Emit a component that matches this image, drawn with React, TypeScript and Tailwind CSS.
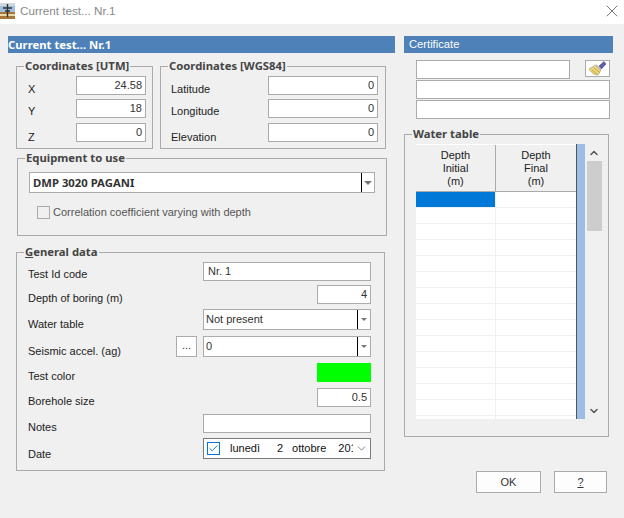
import { ReactNode } from 'react';
import { X, ChevronUp, ChevronDown, Check } from 'lucide-react';

const BOLD = "font-['Noto_Sans',sans-serif] font-bold text-[11.3px]";

function Field({ value, className, right }: { value?: string; className: string; right?: boolean }) {
  return (
    <div className={`border border-[#ababab] bg-white flex items-center px-[3px] text-[#333] ${right ? 'justify-end' : ''} ${className}`}>
      {value}
    </div>
  );
}

function Combo({ value, className, bold, arrow }: { value: string; className: string; bold?: boolean; arrow: string }) {
  return (
    <div className={`border border-[#ababab] bg-white flex items-center text-[#333] ${className}`}>
      <span className={`flex-1 ${bold ? `${BOLD} pl-[3px]` : 'pl-[2px]'}`}>{value}</span>
      <div className="w-[13px] self-stretch border-l border-black flex items-center justify-center">
        <div className={`w-0 h-0 border-x-transparent border-t-[#777] ${arrow}`} />
      </div>
    </div>
  );
}

function Group({ title, className, children }: { title: ReactNode; className: string; children: ReactNode }) {
  return (
    <div className={`relative border border-[#ababab] ${className}`}>
      <span className={`absolute left-[7px] -top-[9px] bg-[#f0f0f0] px-[1px] text-[#444] leading-[16px] ${BOLD}`}>{title}</span>
      {children}
    </div>
  );
}

function CoordRow({ label, value, labelW, fieldW, labelPad }: { label: string; value: string; labelW: string; fieldW: string; labelPad: string }) {
  return (
    <div className="flex h-[19px] text-[#222]">
      <span className={`leading-[18px] ${labelPad} ${labelW}`}>{label}</span>
      <Field value={value} right className={`h-[19px] ${fieldW}`} />
    </div>
  );
}

function DataRow({ label, className, labelPad, children }: { label: string; className: string; labelPad: string; children: ReactNode }) {
  return (
    <div className={`flex justify-between ${className}`}>
      <span className={`leading-[18px] text-[#222] ${labelPad}`}>{label}</span>
      {children}
    </div>
  );
}

function Broom() {
  return (
    <svg width="19" height="15" viewBox="0 0 19 15">
      <path d="M1 8 L8 4 L13 9 L10 14 C6 14 3 11 1 8 Z" fill="#ecd67a" stroke="#a89a55" strokeWidth="0.7" />
      <path d="M4 9 L9 13 M6 7 L11 11" stroke="#c4a94c" strokeWidth="1" />
      <path d="M8 4 L13 9" stroke="#bdbdbd" strokeWidth="1.8" />
      <path d="M11 5 L16 0.5 L18 3 L13.5 8 Z" fill="#5b5fa8" stroke="#3e4180" strokeWidth="0.5" />
    </svg>
  );
}

function AppIcon() {
  return (
    <svg width="15" height="16" viewBox="0 0 15 16" className="mb-[2px]">
      <rect x="0" y="0" width="15" height="3" fill="#cfd8df" />
      <rect x="0" y="3" width="15" height="6" fill="#9fc0dc" />
      <rect x="0" y="9" width="15" height="7" fill="#a8763a" />
      <rect x="0" y="11" width="15" height="2" fill="#e9d9a5" />
      <path d="M7.5 1 V14 M3 5 H12 M5 8 H10" stroke="#333" strokeWidth="1.4" />
    </svg>
  );
}

export default function App() {
  const rows = Array.from({ length: 15 });
  return (
    <div className="font-['Liberation_Sans',sans-serif] w-[624px] h-[518px] overflow-hidden bg-[#f0f0f0] text-[11px] leading-none flex flex-col">
      {/* Title bar */}
      <div className="h-6 bg-white flex items-center shrink-0">
        <AppIcon />
        <span className="ml-[5px] pb-[2px] text-[11.7px] text-[#8a8a8a]">Current test... Nr.1</span>
        <X className="ml-auto mr-[2px] mb-[2px] h-[20px] w-[20px] text-[#777]" strokeWidth={1.2} />
      </div>

      <div className="flex pt-3 pl-2">
        {/* Left column */}
        <div className="w-[387px] shrink-0">
          <div className={`h-[17px] bg-[#4d81b8] text-white flex items-center ${BOLD}`}>Current test... Nr.1</div>

          <div className="flex gap-[7px] mt-[13px] ml-2">
            <Group title="Coordinates [UTM]" className="w-[137px] h-[83px] pt-[9px] pl-[11px]">
              <div className="flex flex-col">
                <CoordRow label="X" value="24.58" labelW="w-[48px]" fieldW="w-[70px]" labelPad="pt-[4px]" />
                <div className="mt-[4px]"><CoordRow label="Y" value="18" labelW="w-[48px]" fieldW="w-[70px]" labelPad="pt-[3px]" /></div>
                <div className="mt-[5px]"><CoordRow label="Z" value="0" labelW="w-[48px]" fieldW="w-[70px]" labelPad="pt-[5px]" /></div>
              </div>
            </Group>
            <Group title="Coordinates [WGS84]" className="w-[226px] h-[83px] pt-[9px] pl-[10px]">
              <div className="flex flex-col">
                <CoordRow label="Latitude" value="0" labelW="w-[97px]" fieldW="w-[110px]" labelPad="pt-[4px]" />
                <div className="mt-[4px]"><CoordRow label="Longitude" value="0" labelW="w-[97px]" fieldW="w-[110px]" labelPad="pt-[3px]" /></div>
                <div className="mt-[5px]"><CoordRow label="Elevation" value="0" labelW="w-[97px]" fieldW="w-[110px]" labelPad="pt-[5px]" /></div>
              </div>
            </Group>
          </div>

          <Group title="Equipment to use" className="mt-[9px] ml-[9px] w-[370px] h-[78px] pt-[13px] pl-[11px]">
            <Combo value="DMP 3020 PAGANI" bold arrow="border-x-[4px] border-t-[4px]" className="w-[346px] h-[21px]" />
            <div className="flex items-center mt-[13px] ml-2">
              <div className="h-[13px] w-[13px] border border-[#ababab] bg-[#f0f0f0]" />
              <span className="ml-[3px] text-[#555]">Correlation coefficient varying with depth</span>
            </div>
          </Group>

          <Group title={<><span className="underline">G</span>eneral data</>} className="mt-[16px] ml-2 w-[369px] h-[219px] pt-[9px] pl-[11px] pr-[13px]">
            <DataRow label="Test Id code" labelPad="pt-[3px]" className="h-[19px]">
              <Field value="Nr. 1" className="w-[168px] h-[19px] pl-[4px]" />
            </DataRow>
            <DataRow label="Depth of boring (m)" labelPad="pt-[4px]" className="h-[19px] mt-[4px]">
              <Field value="4" right className="w-[54px] h-[19px]" />
            </DataRow>
            <DataRow label="Water table" labelPad="pt-[6px]" className="h-[21px] mt-[5px]">
              <Combo value="Not present" arrow="border-x-[3px] border-t-[3px]" className="w-[168px] h-[21px]" />
            </DataRow>
            <div className="flex h-[21px] mt-[6px]">
              <span className="pt-[6px] leading-[18px] text-[#222]">Seismic accel. (ag)</span>
              <div className="ml-auto mr-[6px] w-[21px] h-[21px] border border-[#ababab] bg-white flex items-center justify-center text-[#333] pb-[2px]">...</div>
              <Combo value="0" arrow="border-x-[3px] border-t-[3px]" className="w-[168px] h-[21px]" />
            </div>
            <DataRow label="Test color" labelPad="pt-[4px]" className="h-[19px] mt-[6px]">
              <div className="w-[54px] h-[19px] bg-[#00ff00]" />
            </DataRow>
            <DataRow label="Borehole size" labelPad="pt-[4px]" className="h-[19px] mt-[6px]">
              <Field value="0.5" right className="w-[54px] h-[19px]" />
            </DataRow>
            <DataRow label="Notes" labelPad="pt-[4px]" className="h-[19px] mt-[7px]">
              <Field className="w-[168px] h-[19px]" />
            </DataRow>
            <DataRow label="Date" labelPad="pt-[7px]" className="h-[21px] mt-[5px]">
              <div className="w-[168px] h-[21px] border border-[#7a7a7a] bg-white flex items-center text-[#111]">
                <div className="ml-[3px] w-[13px] h-[13px] border border-[#0078d7] flex items-center justify-center">
                  <Check className="h-[11px] w-[11px] text-[#0078d7]" strokeWidth={2} />
                </div>
                <span className="ml-[10px]">lunedì</span>
                <span className="ml-[17px]">2</span>
                <span className="ml-[9px]">ottobre</span>
                <span className="ml-[12px] w-[15px] overflow-hidden">201</span>
                <ChevronDown className="ml-[2px] h-[13px] w-[13px] text-[#555]" strokeWidth={1.3} />
              </div>
            </DataRow>
          </Group>
        </div>

        {/* Right column */}
        <div className="ml-[9px] w-[209px] shrink-0">
          <div className="h-[17px] bg-[#4d81b8] text-white text-[11.2px] flex items-center pl-[5px] pt-[1px]">Certificate</div>

          <div className="ml-3 mt-[7px] w-[194px] flex flex-col gap-[1px]">
            <div className="flex justify-between">
              <Field className="w-[154px] h-[19px]" />
              <div className="w-[25px] h-[17px] border border-[#ababab] bg-white flex items-center justify-center">
                <Broom />
              </div>
            </div>
            <Field className="h-[19px]" />
            <Field className="h-[19px]" />
          </div>

          <Group title="Water table" className="mt-[15px] w-[205px] h-[303px] pt-[9px] pl-[11px]">
            <div className="flex h-[275px]">
              <div className="w-[161px] border-r border-[#555] bg-white overflow-hidden">
                <div className="flex h-[48px] bg-[#f0f0f0] border-b border-[#ababab] border-t border-t-white text-center text-[#222] leading-[13px]">
                  <div className="w-[80px] border-r border-[#ababab] pt-[4px]">Depth<br />Initial<br />(m)</div>
                  <div className="flex-1 pt-[4px]">Depth<br />Final<br />(m)</div>
                </div>
                {rows.map((_, i) => (
                  <div key={i} className="flex h-[16px] border-b border-[#f0f0f0]">
                    <div className={`w-[80px] border-r border-[#f0f0f0] ${i === 0 ? 'bg-[#0078d7]' : ''}`} />
                    <div className="flex-1" />
                  </div>
                ))}
              </div>
              <div className="w-[8px] bg-[#9dbde8]" />
              <div className="w-[16px] ml-[1px] flex flex-col items-center">
                <ChevronUp className="h-[12px] w-[12px] mt-[3px] text-[#555]" strokeWidth={3} />
                <div className="w-[15px] h-[70px] bg-[#cdcdcd] mt-[2px]" />
                <ChevronDown className="h-[12px] w-[12px] mt-auto mb-[2px] text-[#555]" strokeWidth={3} />
              </div>
            </div>
          </Group>

          <div className="flex justify-end gap-[13px] mt-[34px] mr-[6px] text-[#333]">
            <div className="w-[65px] h-[22px] border border-[#ababab] bg-[#fdfdfd] flex items-center justify-center">OK</div>
            <div className="w-[53px] h-[22px] border border-[#ababab] bg-[#fdfdfd] flex items-center justify-center underline">?</div>
          </div>
        </div>
      </div>
    </div>
  );
}
